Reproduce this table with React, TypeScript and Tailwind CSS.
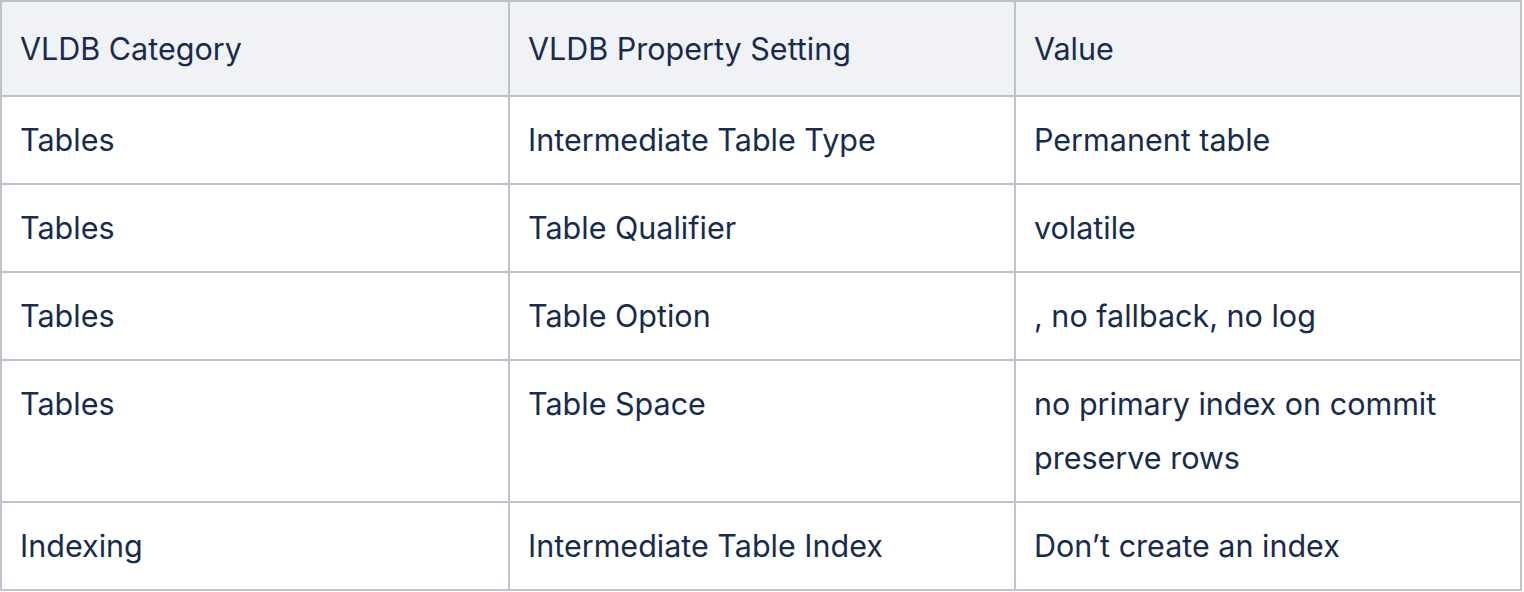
const rows: [string, string, string][] = [
  ['Tables', 'Intermediate Table Type', 'Permanent table'],
  ['Tables', 'Table Qualifier', 'volatile'],
  ['Tables', 'Table Option', ', no fallback, no log'],
  ['Tables', 'Table Space', 'no primary index on commit preserve rows'],
  ['Indexing', 'Intermediate Table Index', 'Don’t create an index'],
];

export default function App() {
  return (
    <div className="bg-white w-[1524px] h-[592px]" style={{ fontFamily: 'Inter, "Noto Sans", sans-serif' }}>
      <table className="w-[1522px] table-fixed border-collapse border-2 border-[#bcc3cd] text-[30.5px] leading-[54px] text-[#172b4d]">
        <thead>
          <tr className="bg-[#f1f2f6] h-[95px]">
            <th className="w-[508px] border-2 border-[#bcc3cd] px-[18px] text-left font-normal align-middle">VLDB Category</th>
            <th className="w-[506px] border-2 border-[#bcc3cd] px-[18px] text-left font-normal align-middle">VLDB Property Setting</th>
            <th className="border-2 border-[#bcc3cd] px-[18px] text-left font-normal align-middle">Value</th>
          </tr>
        </thead>
        <tbody>
          {rows.map((r, i) => (
            <tr key={i}>
              {r.map((c, j) => (
                <td key={j} className="border-2 border-[#bcc3cd] px-[18px] py-4 align-top">
                  {c}
                </td>
              ))}
            </tr>
          ))}
        </tbody>
      </table>
    </div>
  );
}
